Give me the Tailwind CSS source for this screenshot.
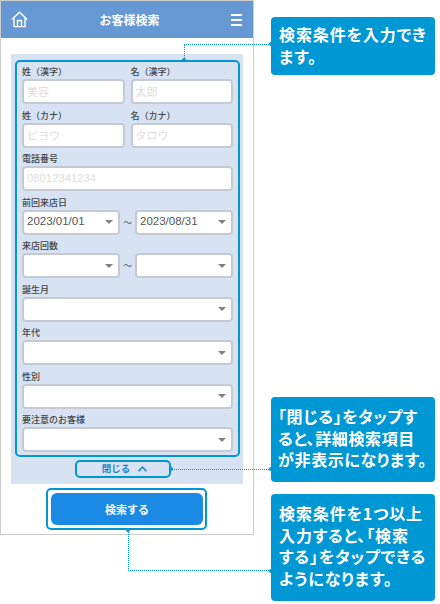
<!DOCTYPE html>
<html lang="ja">
<head>
<meta charset="UTF-8">
<meta name="viewport" content="width=device-width, initial-scale=1.0">
<title>お客様検索</title>
<script src="https://cdn.jsdelivr.net/npm/@tailwindcss/browser@4"></script>
</head>
<body class="bg-white font-['Noto_Sans_CJK_JP',sans-serif]">
<div class="relative w-[440px] h-[604px] overflow-hidden flex items-start">
    <!-- phone screen -->
    <div class="w-[254px] h-[535px] shrink-0 border border-[#cccccc] bg-white">
        <header class="h-[37px] bg-[#6699d3] flex items-center justify-between pl-[10px] pr-[11px]">
            <svg width="17" height="17" viewBox="0 0 17 17" fill="none" stroke="#fff" stroke-width="1.4"><path d="M.8 8.5 8.5 1.2l7.7 7.3"/><path d="M3 7v8.6h11V7"/><path d="M6.5 15.6V9.5h4v6.1"/></svg>
            <span class="text-[12px] font-bold text-white leading-none">お客様検索</span>
            <div class="flex flex-col gap-[3px] w-[11px]">
                <span class="h-[2px] bg-white"></span>
                <span class="h-[2px] bg-white"></span>
                <span class="h-[2px] bg-white"></span>
            </div>
        </header>

        <div class="mt-[16px] mx-[10px] h-[430px] bg-[#d7e3f3] pt-[6px] px-[4px]">
            <div class="w-[225px] h-[397px] border-2 border-[#0098d4] rounded-[5px] pt-[4px] px-[5px] flex flex-col gap-[5.5px]">
                <div class="grid grid-cols-2 gap-x-[6px]">
                    <div>
                        <p class="h-[12px] mb-[1px] text-[9px] leading-[12px] font-medium text-[#444]">姓（漢字）</p>
                        <div class="h-[25px] border-2 border-[#c5cad2] rounded-[4px] bg-white px-[3px] text-[11px] leading-[21px] text-[#dedede]">美容</div>
                    </div>
                    <div>
                        <p class="h-[12px] mb-[1px] text-[9px] leading-[12px] font-medium text-[#444]">名（漢字）</p>
                        <div class="h-[25px] border-2 border-[#c5cad2] rounded-[4px] bg-white px-[3px] text-[11px] leading-[21px] text-[#dedede]">太郎</div>
                    </div>
                </div>
                <div class="grid grid-cols-2 gap-x-[6px]">
                    <div>
                        <p class="h-[12px] mb-[1px] text-[9px] leading-[12px] font-medium text-[#444]">姓（カナ）</p>
                        <div class="h-[25px] border-2 border-[#c5cad2] rounded-[4px] bg-white px-[3px] text-[11px] leading-[21px] text-[#dedede]">ビヨウ</div>
                    </div>
                    <div>
                        <p class="h-[12px] mb-[1px] text-[9px] leading-[12px] font-medium text-[#444]">名（カナ）</p>
                        <div class="h-[25px] border-2 border-[#c5cad2] rounded-[4px] bg-white px-[3px] text-[11px] leading-[21px] text-[#dedede]">タロウ</div>
                    </div>
                </div>
                <div>
                    <p class="h-[12px] mb-[1px] text-[9px] leading-[12px] font-medium text-[#444]">電話番号</p>
                    <div class="h-[25px] border-2 border-[#c5cad2] rounded-[4px] bg-white px-[3px] font-['Liberation_Sans',sans-serif] text-[11.3px] leading-[21px] text-[#dedede]">08012341234</div>
                </div>
                <div>
                    <p class="h-[12px] mb-[1px] text-[9px] leading-[12px] font-medium text-[#444]">前回来店日</p>
                    <div class="flex items-center">
                        <div class="w-[98px] h-[25px] border-2 border-[#c5cad2] rounded-[4px] bg-white pl-[3px] pr-[5px] flex items-center justify-between font-['Liberation_Sans',sans-serif] text-[11.5px] text-[#555]">2023/01/01<span class="w-0 h-0 border-x-[4px] border-x-transparent border-t-[4px] border-t-[#808080]"></span></div>
                        <span class="w-[15px] text-center text-[9px] leading-none text-[#555]">～</span>
                        <div class="w-[98px] h-[25px] border-2 border-[#c5cad2] rounded-[4px] bg-white pl-[3px] pr-[5px] flex items-center justify-between font-['Liberation_Sans',sans-serif] text-[11.5px] text-[#555]">2023/08/31<span class="w-0 h-0 border-x-[4px] border-x-transparent border-t-[4px] border-t-[#808080]"></span></div>
                    </div>
                </div>
                <div>
                    <p class="h-[12px] mb-[1px] text-[9px] leading-[12px] font-medium text-[#444]">来店回数</p>
                    <div class="flex items-center">
                        <div class="w-[98px] h-[25px] border-2 border-[#c5cad2] rounded-[4px] bg-white pr-[5px] flex items-center justify-end"><span class="w-0 h-0 border-x-[4px] border-x-transparent border-t-[4px] border-t-[#808080]"></span></div>
                        <span class="w-[15px] text-center text-[9px] leading-none text-[#555]">～</span>
                        <div class="w-[98px] h-[25px] border-2 border-[#c5cad2] rounded-[4px] bg-white pr-[5px] flex items-center justify-end"><span class="w-0 h-0 border-x-[4px] border-x-transparent border-t-[4px] border-t-[#808080]"></span></div>
                    </div>
                </div>
                <div>
                    <p class="h-[12px] mb-[1px] text-[9px] leading-[12px] font-medium text-[#444]">誕生月</p>
                    <div class="h-[25px] border-2 border-[#c5cad2] rounded-[4px] bg-white pr-[5px] flex items-center justify-end"><span class="w-0 h-0 border-x-[4px] border-x-transparent border-t-[4px] border-t-[#808080]"></span></div>
                </div>
                <div>
                    <p class="h-[12px] mb-[1px] text-[9px] leading-[12px] font-medium text-[#444]">年代</p>
                    <div class="h-[25px] border-2 border-[#c5cad2] rounded-[4px] bg-white pr-[5px] flex items-center justify-end"><span class="w-0 h-0 border-x-[4px] border-x-transparent border-t-[4px] border-t-[#808080]"></span></div>
                </div>
                <div>
                    <p class="h-[12px] mb-[1px] text-[9px] leading-[12px] font-medium text-[#444]">性別</p>
                    <div class="h-[25px] border-2 border-[#c5cad2] rounded-[4px] bg-white pr-[5px] flex items-center justify-end"><span class="w-0 h-0 border-x-[4px] border-x-transparent border-t-[4px] border-t-[#808080]"></span></div>
                </div>
                <div>
                    <p class="h-[12px] mb-[1px] text-[9px] leading-[12px] font-medium text-[#444]">要注意のお客様</p>
                    <div class="h-[25px] border-2 border-[#c5cad2] rounded-[4px] bg-white pr-[5px] flex items-center justify-end"><span class="w-0 h-0 border-x-[4px] border-x-transparent border-t-[4px] border-t-[#808080]"></span></div>
                </div>
            </div>
            <div class="mt-[3px] ml-[60px] w-[96px] h-[18px] border-2 border-[#0098d4] rounded-[5px] pl-[3px] flex items-center justify-center gap-[8px] text-[9.5px] font-bold text-[#1b86c8] leading-none">
                閉じる
                <svg width="9" height="6" viewBox="0 0 9 6" fill="none" stroke="#1b86c8" stroke-width="1.6"><path d="M.6 5.2 4.5 1.2l3.9 4"/></svg>
            </div>
        </div>

        <div class="mt-[4px] ml-[45px] w-[161px] h-[42px] border-2 border-[#0098d4] rounded-[5px] pl-[3px] pr-[2px] py-[3px]">
            <button class="w-full h-full bg-[#1a8ae5] rounded-[6px] text-[11px] font-bold text-white leading-none">検索する</button>
        </div>
    </div>

    <!-- callouts -->
    <div class="ml-[17px] w-[164px] shrink-0 pt-[17px] flex flex-col font-bold text-white text-[16px] leading-[21.5px] whitespace-nowrap [font-feature-settings:'palt']">
        <div class="h-[58px] bg-[#0098d4] rounded-[4px] pl-[8px] pt-[7px] tracking-[0.9px]">検索条件を入力でき<br>ます。</div>
        <div class="mt-[322px] h-[85px] bg-[#0098d4] rounded-[4px] pl-[7px] pt-[9px] tracking-[0.6px]">「閉じる」をタップす<br>ると、詳細検索項目<br>が非表示になります。</div>
        <div class="mt-[12px] h-[107px] bg-[#0098d4] rounded-[4px] pl-[8px] pt-[9px] tracking-[0.9px]">検索条件を1つ以上<br>入力すると、「検索<br>する」をタップできる<br>ようになります。</div>
    </div>

    <!-- annotation connectors -->
    <div class="absolute left-[184px] top-[44px] w-[87px] h-[16px] border-l border-t border-dotted border-[#0098d4]"></div>
    <span class="absolute left-[182px] top-[58px] w-[4px] h-[4px] rounded-full bg-[#0098d4]"></span>
    <span class="absolute left-[269px] top-[42px] w-[4px] h-[4px] rounded-full bg-[#0098d4]"></span>
    <div class="absolute left-[171px] top-[469px] w-[100px] border-t border-dotted border-[#0098d4]"></div>
    <span class="absolute left-[169px] top-[467px] w-[4px] h-[4px] rounded-full bg-[#0098d4]"></span>
    <span class="absolute left-[269px] top-[467px] w-[4px] h-[4px] rounded-full bg-[#0098d4]"></span>
    <div class="absolute left-[128px] top-[530px] w-[143px] h-[41px] border-l border-b border-dotted border-[#0098d4]"></div>
    <span class="absolute left-[126px] top-[528px] w-[4px] h-[4px] rounded-full bg-[#0098d4]"></span>
    <span class="absolute left-[269px] top-[569px] w-[4px] h-[4px] rounded-full bg-[#0098d4]"></span>
</div>
</body>
</html>
